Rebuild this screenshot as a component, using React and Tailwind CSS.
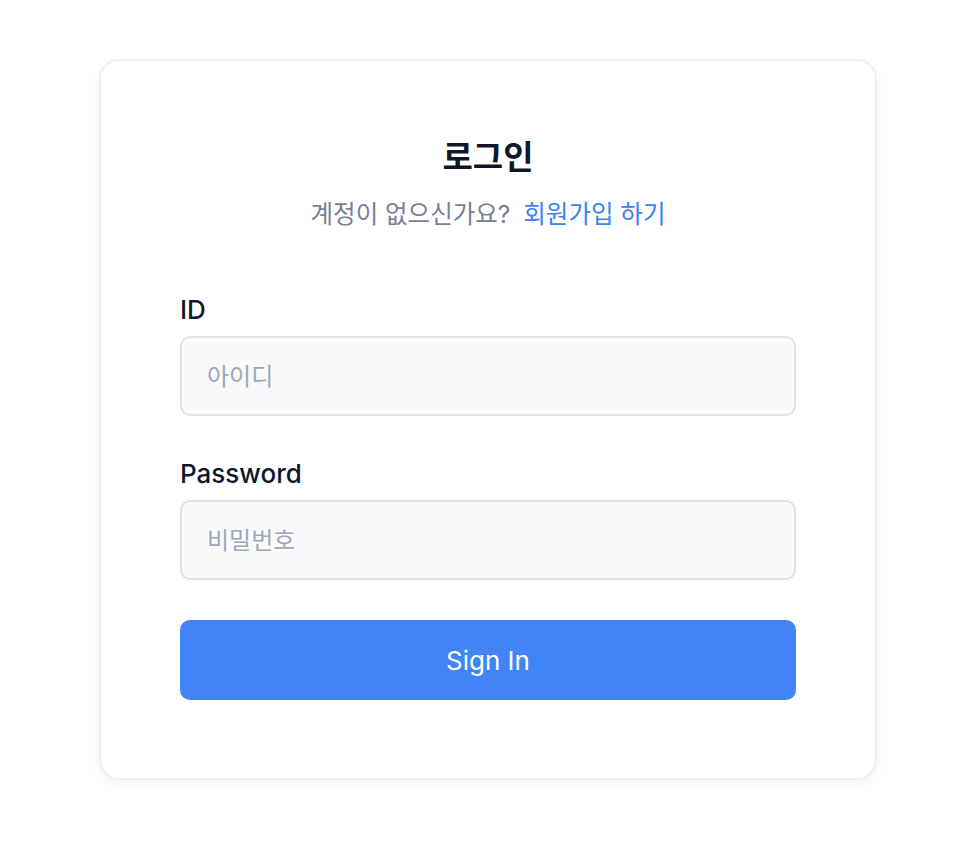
import { useState } from 'react';

const font = { fontFamily: 'Inter, "Noto Sans CJK KR", sans-serif' };

const Field = ({ label, type, placeholder, value, onChange, className }) => (
  <div className={className}>
    <label className="block text-[26px] leading-[32px] font-medium text-[#0f172a]">{label}</label>
    <input
      type={type}
      value={value}
      onChange={(e) => onChange(e.target.value)}
      placeholder={placeholder}
      className="mt-[10px] block w-full h-[80px] px-[25px] rounded-[10px] border-2 border-[#e0e2ea] bg-[#fafafc] text-[24px] text-[#0f172a] placeholder:text-[#a0a6b8] outline-none"
    />
  </div>
);

const App = () => {
  const [id, setId] = useState('');
  const [password, setPassword] = useState('');

  return (
    <div className="min-h-screen bg-white pt-[59px] pl-[99px]" style={font}>
      <div className="w-[778px] rounded-[20px] border-2 border-[#f0f0f0] bg-white px-[79px] pt-[76px] pb-[78px] shadow-[0_4px_12px_rgba(0,0,0,0.04)]">
        {/* Header */}
        <h1 className="text-center text-[33px] leading-[40px] font-bold text-[#0f172a]">로그인</h1>
        <p className="mt-[23px] text-center text-[24.5px] leading-[28px] text-[#787e95]">
          계정이 없으신가요?
          <a href="#" className="ml-[13px] text-[#3b82f6]">회원가입 하기</a>
        </p>

        {/* Form */}
        <form className="mt-[66px]" onSubmit={(e) => e.preventDefault()}>
          <Field label="ID" type="text" placeholder="아이디" value={id} onChange={setId} />
          <Field
            label="Password"
            type="password"
            placeholder="비밀번호"
            value={password}
            onChange={setPassword}
            className="mt-[42px]"
          />
          <button
            type="submit"
            className="mt-[40px] block w-full h-[80px] rounded-[10px] bg-[#4184f7] text-[26px] text-white"
          >
            Sign In
          </button>
        </form>
      </div>
    </div>
  );
};

export default App;
